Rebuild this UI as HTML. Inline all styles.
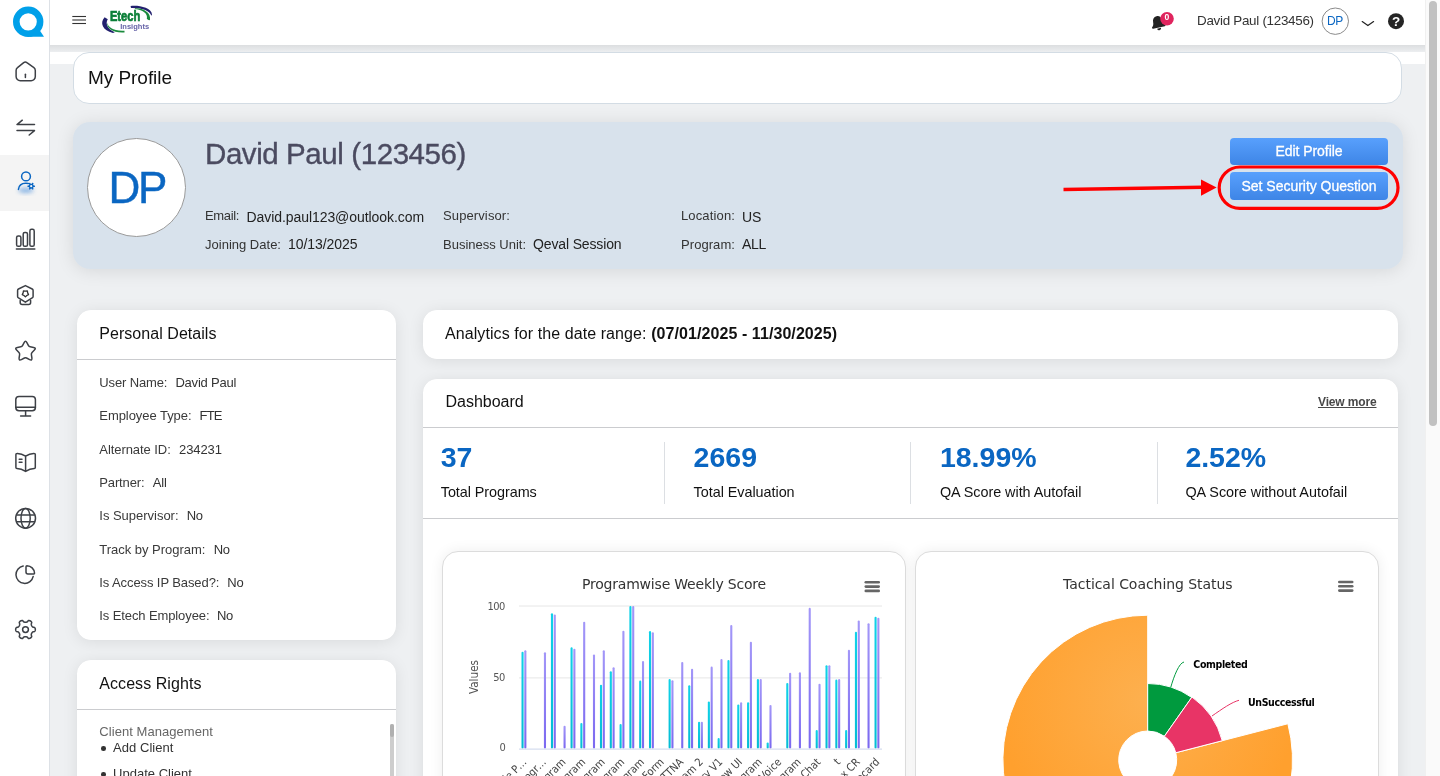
<!DOCTYPE html>
<html lang="en">
<head>
<meta charset="utf-8">
<title>My Profile</title>
<style>
*{box-sizing:border-box;margin:0;padding:0}
html,body{width:1440px;height:776px;overflow:hidden}
body{position:relative;background:#eef0f2;font-family:"Liberation Sans",sans-serif;color:#333;font-size:13px}
#app{position:absolute;left:0;top:0;width:1440px;height:776px;overflow:hidden;will-change:transform}
.abs{position:absolute}
.t{position:absolute;white-space:nowrap;line-height:1}
#side{left:0;top:0;width:50px;height:776px;background:#fff;border-right:1px solid #dde1e6}
#side .act{position:absolute;left:0;top:155px;width:49px;height:56px;background:#f4f4f4}
#top{left:50px;top:0;width:1375px;height:45px;background:#fff}
#topsh{left:50px;top:45px;width:1375px;height:7px;background:linear-gradient(#dcdee0,#eceef0)}
#band{left:50px;top:52px;width:1375px;height:12px;background:#fff}
#strack{left:1425px;top:0;width:15px;height:776px;background:#fafafa;border-left:1px solid #f0f0f0}
#sthumb{left:1429px;top:1px;width:8px;height:425px;border-radius:4px;background:#c1c1c1}
.card{position:absolute;background:#fff;border-radius:14px}
.sh{box-shadow:0 2px 16px rgba(0,0,0,.085),0 0 1px rgba(0,0,0,.08)}
.hl{position:absolute;height:1px;background:#cbcccf}
.vl1{position:absolute;width:1px;background:#dcdfe3}
#pcard{left:72.5px;top:122px;width:1330px;height:147px;background:#d8e2ec;border-radius:17px;box-shadow:0 2px 18px rgba(0,0,0,.10)}
#avatar{left:87px;top:138px;width:99px;height:99px;border-radius:50%;background:#fff;border:1px solid #9a9a9a}
.btn{position:absolute;left:1230px;width:158px;border-radius:4px;background:linear-gradient(#58a0fd,#3e85e6)}

.ccard{position:absolute;background:#fff;border-radius:16px;border:1px solid #dcdcdc;box-shadow:0 0 14px rgba(0,0,0,.07)}
</style>
</head>
<body>
<div id="app">

<div id="top" class="abs"></div>
<div id="topsh" class="abs"></div>
<div id="band" class="abs"></div>
<div id="side" class="abs"><div class="act"></div>
</div>
<div id="strack" class="abs"></div>
<div id="sthumb" class="abs"></div>
<div class="card" style="left:73px;top:52px;width:1329px;height:51.5px;border:1px solid #d3dce4;border-radius:16px"></div>
<div class="t" style="left:88.0px;top:68.4px;font-size:19px;color:#111;letter-spacing:-0.047px;">My Profile</div>
<div id="pcard" class="abs"></div>
<div id="avatar" class="abs"></div>
<div class="t" style="left:108.5px;top:165.8px;font-size:44px;color:#0a66c2;letter-spacing:-2.312px;-webkit-text-stroke:0.45px #0a66c2;">DP</div>
<div class="t" style="left:205.0px;top:139.0px;font-size:29.5px;color:#4b4b60;letter-spacing:-0.419px;-webkit-text-stroke:0.35px #4b4b60;">David Paul (123456)</div>
<div class="t" style="left:205.0px;top:209.3px;font-size:13px;color:#333;letter-spacing:-0.354px;">Email:</div>
<div class="t" style="left:246.5px;top:209.6px;font-size:14px;color:#222;letter-spacing:-0.069px;">David.paul123@outlook.com</div>
<div class="t" style="left:443.0px;top:209.3px;font-size:13px;color:#333;letter-spacing:0.114px;">Supervisor:</div>
<div class="t" style="left:681.0px;top:209.3px;font-size:13px;color:#333;letter-spacing:0.137px;">Location:</div>
<div class="t" style="left:742.0px;top:209.6px;font-size:14px;color:#222;letter-spacing:-0.227px;">US</div>
<div class="t" style="left:205.0px;top:237.5px;font-size:13px;color:#333;letter-spacing:0.008px;">Joining Date:</div>
<div class="t" style="left:288.0px;top:237.1px;font-size:14px;color:#222;letter-spacing:-0.058px;">10/13/2025</div>
<div class="t" style="left:443.0px;top:237.5px;font-size:13px;color:#333;letter-spacing:-0.007px;">Business Unit:</div>
<div class="t" style="left:533.0px;top:237.1px;font-size:14px;color:#222;letter-spacing:-0.137px;">Qeval Session</div>
<div class="t" style="left:681.0px;top:237.5px;font-size:13px;color:#333;letter-spacing:0.066px;">Program:</div>
<div class="t" style="left:742.0px;top:237.1px;font-size:14px;color:#222;letter-spacing:-0.307px;">ALL</div>
<div class="btn" style="top:138px;height:26.8px"></div>
<div class="btn" style="top:172px;height:28px"></div>
<div class="t" style="left:1275.5px;top:144.1px;font-size:14px;color:#fff;letter-spacing:-0.059px;-webkit-text-stroke:0.3px #fff;">Edit Profile</div>
<div class="t" style="left:1241.5px;top:179.1px;font-size:14px;color:#fff;letter-spacing:-0.019px;-webkit-text-stroke:0.3px #fff;">Set Security Question</div>
<svg class="abs" style="left:1050px;top:160px" width="360" height="56" viewBox="1050 160 360 56">
<rect x="1219.2" y="167" width="178.8" height="41.3" rx="20.6" fill="none" stroke="#ff0000" stroke-width="3.2"/>
<line x1="1063.5" y1="189.6" x2="1203" y2="187.2" stroke="#ff0000" stroke-width="3.5"/>
<polygon points="1201,179.6 1216.6,187.4 1201,195.8" fill="#ff0000"/>
</svg><div class="card sh" style="left:77px;top:310px;width:319px;height:330px"></div>
<div class="hl" style="left:77px;top:359px;width:319px"></div>
<div class="t" style="left:99.3px;top:325.5px;font-size:16px;color:#111;letter-spacing:0.044px;">Personal Details</div>
<div class="t" style="left:99.3px;top:376.2px;font-size:13px;color:#3a3a3a;letter-spacing:-0.136px;">User Name:</div>
<div class="t" style="left:175.4px;top:376.2px;font-size:13px;color:#333;letter-spacing:-0.197px;">David Paul</div>
<div class="t" style="left:99.3px;top:409.3px;font-size:13px;color:#3a3a3a;letter-spacing:-0.056px;">Employee Type:</div>
<div class="t" style="left:199.5px;top:409.3px;font-size:13px;color:#333;letter-spacing:-0.754px;">FTE</div>
<div class="t" style="left:99.3px;top:442.7px;font-size:13px;color:#3a3a3a;letter-spacing:-0.067px;">Alternate ID:</div>
<div class="t" style="left:179.1px;top:442.7px;font-size:13px;color:#333;letter-spacing:-0.115px;">234231</div>
<div class="t" style="left:99.3px;top:476.2px;font-size:13px;color:#3a3a3a;letter-spacing:-0.144px;">Partner:</div>
<div class="t" style="left:152.8px;top:476.2px;font-size:13px;color:#333;letter-spacing:-0.184px;">All</div>
<div class="t" style="left:99.3px;top:509.3px;font-size:13px;color:#3a3a3a;letter-spacing:-0.020px;">Is Supervisor:</div>
<div class="t" style="left:186.8px;top:509.3px;font-size:13px;color:#333;letter-spacing:-0.413px;">No</div>
<div class="t" style="left:99.3px;top:543.0px;font-size:13px;color:#3a3a3a;letter-spacing:-0.020px;">Track by Program:</div>
<div class="t" style="left:213.7px;top:543.0px;font-size:13px;color:#333;letter-spacing:-0.262px;">No</div>
<div class="t" style="left:99.3px;top:576.0px;font-size:13px;color:#3a3a3a;letter-spacing:-0.095px;">Is Access IP Based?:</div>
<div class="t" style="left:227.3px;top:576.0px;font-size:13px;color:#333;letter-spacing:-0.263px;">No</div>
<div class="t" style="left:99.3px;top:609.1px;font-size:13px;color:#3a3a3a;letter-spacing:-0.106px;">Is Etech Employee:</div>
<div class="t" style="left:217.1px;top:609.1px;font-size:13px;color:#333;letter-spacing:-0.362px;">No</div>
<div class="card sh" style="left:77px;top:660px;width:319px;height:140px"></div>
<div class="hl" style="left:77px;top:709px;width:319px"></div>
<div class="t" style="left:99.3px;top:675.5px;font-size:16px;color:#111;letter-spacing:0.063px;">Access Rights</div>
<div class="t" style="left:99.3px;top:725.0px;font-size:13px;color:#666;letter-spacing:0.057px;">Client Management</div>
<div class="abs" style="left:101px;top:746.3px;width:4.6px;height:4.6px;border-radius:50%;background:#333"></div>
<div class="t" style="left:113.0px;top:740.8px;font-size:13px;color:#333;letter-spacing:0.052px;">Add Client</div>
<div class="abs" style="left:101px;top:772.3px;width:4.6px;height:4.6px;border-radius:50%;background:#333"></div>
<div class="t" style="left:113.0px;top:766.8px;font-size:13px;color:#333;letter-spacing:0.017px;">Update Client</div>
<div class="abs" style="left:389.5px;top:724px;width:4.5px;height:60px;background:#cdcdcd;border-radius:2px 2px 0 0"></div>
<div class="abs" style="left:389.5px;top:724px;width:4.5px;height:13px;background:#b0b0b0;border-radius:2px"></div>
<div class="card sh" style="left:423px;top:310px;width:975px;height:49px"></div>
<div class="t" style="left:445.0px;top:325.8px;font-size:16px;color:#111;letter-spacing:0.078px;">Analytics for the date range:</div>
<div class="t" style="left:651.2px;top:325.8px;font-size:16px;color:#111;font-weight:bold;letter-spacing:0.074px;">(07/01/2025 - 11/30/2025)</div>
<div class="card sh" style="left:423px;top:379px;width:975px;height:430px"></div>
<div class="hl" style="left:423px;top:427px;width:975px"></div>
<div class="hl" style="left:423px;top:518px;width:975px"></div>
<div class="t" style="left:445.5px;top:393.5px;font-size:16px;color:#111;letter-spacing:-0.020px;">Dashboard</div>
<div class="t" style="left:1318.0px;top:396.4px;font-size:12px;color:#484848;font-weight:bold;letter-spacing:-0.146px;text-decoration:underline;">View more</div>
<div class="t" style="left:440.8px;top:442.6px;font-size:28.5px;color:#0a66c2;font-weight:bold;letter-spacing:-0.152px;">37</div>
<div class="t" style="left:440.8px;top:485.0px;font-size:14.4px;color:#111;letter-spacing:-0.063px;">Total Programs</div>
<div class="t" style="left:693.6px;top:442.6px;font-size:28.5px;color:#0a66c2;font-weight:bold;letter-spacing:-0.002px;">2669</div>
<div class="t" style="left:693.6px;top:485.0px;font-size:14.4px;color:#111;letter-spacing:-0.038px;">Total Evaluation</div>
<div class="t" style="left:939.9px;top:442.6px;font-size:28.5px;color:#0a66c2;font-weight:bold;letter-spacing:0.005px;">18.99%</div>
<div class="t" style="left:939.9px;top:485.0px;font-size:14.4px;color:#111;letter-spacing:-0.040px;">QA Score with Autofail</div>
<div class="t" style="left:1185.4px;top:442.6px;font-size:28.5px;color:#0a66c2;font-weight:bold;letter-spacing:-0.043px;">2.52%</div>
<div class="t" style="left:1185.4px;top:485.0px;font-size:14.4px;color:#111;letter-spacing:-0.024px;">QA Score without Autofail</div>
<div class="vl1" style="left:664.4px;top:442px;height:62px"></div>
<div class="vl1" style="left:910.2px;top:442px;height:62px"></div>
<div class="vl1" style="left:1156.5px;top:442px;height:62px"></div>
<div class="ccard" style="left:441.5px;top:551px;width:464px;height:260px"></div>
<div class="ccard" style="left:914.7px;top:551px;width:464.8px;height:260px"></div>
<svg class="abs" style="left:0;top:540px" width="1440" height="236" viewBox="0 540 1440 236"><defs><linearGradient id="gc" x1="0" y1="0" x2="0" y2="1"><stop offset="0" stop-color="#10d2e8"/><stop offset="1" stop-color="#04bcd4"/></linearGradient><linearGradient id="gp" x1="0" y1="0" x2="0" y2="1"><stop offset="0" stop-color="#a397f8"/><stop offset="1" stop-color="#7a68f0"/></linearGradient><radialGradient id="go" gradientUnits="userSpaceOnUse" cx="1147.7" cy="700" r="150"><stop offset="0" stop-color="#fdb04f"/><stop offset="1" stop-color="#ffa02e"/></radialGradient></defs><line x1="519" y1="606.0" x2="882" y2="606.0" stroke="#e6e6e6" stroke-width="1"/><line x1="519" y1="677.9" x2="882" y2="677.9" stroke="#e6e6e6" stroke-width="1"/><rect x="521.50" y="651.63" width="2.1" height="96.97" rx="1.05" fill="url(#gc)"/><rect x="524.30" y="650.21" width="2.1" height="98.39" rx="1.05" fill="url(#gp)"/><rect x="543.92" y="652.20" width="2.1" height="96.40" rx="1.05" fill="url(#gp)"/><rect x="550.92" y="613.13" width="2.1" height="135.47" rx="1.05" fill="url(#gc)"/><rect x="553.72" y="614.56" width="2.1" height="134.04" rx="1.05" fill="url(#gp)"/><rect x="563.53" y="725.78" width="2.1" height="22.82" rx="1.05" fill="url(#gp)"/><rect x="570.53" y="647.35" width="2.1" height="101.25" rx="1.05" fill="url(#gc)"/><rect x="573.33" y="648.78" width="2.1" height="99.82" rx="1.05" fill="url(#gp)"/><rect x="580.34" y="722.93" width="2.1" height="25.67" rx="1.05" fill="url(#gc)"/><rect x="583.14" y="621.69" width="2.1" height="126.91" rx="1.05" fill="url(#gp)"/><rect x="592.95" y="654.48" width="2.1" height="94.12" rx="1.05" fill="url(#gp)"/><rect x="599.95" y="684.72" width="2.1" height="63.88" rx="1.05" fill="url(#gc)"/><rect x="602.75" y="650.21" width="2.1" height="98.39" rx="1.05" fill="url(#gp)"/><rect x="609.76" y="671.31" width="2.1" height="77.29" rx="1.05" fill="url(#gc)"/><rect x="612.56" y="667.32" width="2.1" height="81.28" rx="1.05" fill="url(#gp)"/><rect x="619.56" y="723.93" width="2.1" height="24.67" rx="1.05" fill="url(#gc)"/><rect x="622.36" y="630.67" width="2.1" height="117.93" rx="1.05" fill="url(#gp)"/><rect x="629.37" y="606.00" width="2.1" height="142.60" rx="1.05" fill="url(#gc)"/><rect x="632.17" y="606.00" width="2.1" height="142.60" rx="1.05" fill="url(#gp)"/><rect x="639.17" y="680.58" width="2.1" height="68.02" rx="1.05" fill="url(#gc)"/><rect x="641.98" y="661.04" width="2.1" height="87.56" rx="1.05" fill="url(#gp)"/><rect x="648.98" y="631.10" width="2.1" height="117.50" rx="1.05" fill="url(#gc)"/><rect x="651.78" y="632.24" width="2.1" height="116.36" rx="1.05" fill="url(#gp)"/><rect x="668.59" y="679.01" width="2.1" height="69.59" rx="1.05" fill="url(#gc)"/><rect x="671.39" y="680.15" width="2.1" height="68.45" rx="1.05" fill="url(#gp)"/><rect x="681.20" y="662.04" width="2.1" height="86.56" rx="1.05" fill="url(#gp)"/><rect x="688.21" y="685.14" width="2.1" height="63.46" rx="1.05" fill="url(#gc)"/><rect x="691.01" y="668.74" width="2.1" height="79.86" rx="1.05" fill="url(#gp)"/><rect x="698.01" y="721.79" width="2.1" height="26.81" rx="1.05" fill="url(#gc)"/><rect x="700.81" y="721.79" width="2.1" height="26.81" rx="1.05" fill="url(#gp)"/><rect x="707.82" y="701.54" width="2.1" height="47.06" rx="1.05" fill="url(#gc)"/><rect x="710.62" y="666.61" width="2.1" height="82.00" rx="1.05" fill="url(#gp)"/><rect x="717.62" y="737.90" width="2.1" height="10.70" rx="1.05" fill="url(#gc)"/><rect x="720.42" y="658.90" width="2.1" height="89.70" rx="1.05" fill="url(#gp)"/><rect x="727.43" y="660.05" width="2.1" height="88.55" rx="1.05" fill="url(#gc)"/><rect x="730.23" y="624.97" width="2.1" height="123.63" rx="1.05" fill="url(#gp)"/><rect x="737.24" y="704.39" width="2.1" height="44.21" rx="1.05" fill="url(#gc)"/><rect x="740.04" y="702.25" width="2.1" height="46.35" rx="1.05" fill="url(#gp)"/><rect x="747.04" y="702.25" width="2.1" height="46.35" rx="1.05" fill="url(#gc)"/><rect x="749.84" y="641.79" width="2.1" height="106.81" rx="1.05" fill="url(#gp)"/><rect x="756.85" y="679.01" width="2.1" height="69.59" rx="1.05" fill="url(#gc)"/><rect x="759.65" y="679.01" width="2.1" height="69.59" rx="1.05" fill="url(#gp)"/><rect x="766.65" y="742.47" width="2.1" height="6.13" rx="1.05" fill="url(#gc)"/><rect x="769.45" y="704.96" width="2.1" height="43.64" rx="1.05" fill="url(#gp)"/><rect x="786.26" y="683.00" width="2.1" height="65.60" rx="1.05" fill="url(#gc)"/><rect x="789.07" y="672.74" width="2.1" height="75.86" rx="1.05" fill="url(#gp)"/><rect x="798.87" y="672.31" width="2.1" height="76.29" rx="1.05" fill="url(#gp)"/><rect x="808.68" y="607.85" width="2.1" height="140.75" rx="1.05" fill="url(#gp)"/><rect x="815.68" y="730.06" width="2.1" height="18.54" rx="1.05" fill="url(#gc)"/><rect x="818.48" y="683.72" width="2.1" height="64.88" rx="1.05" fill="url(#gp)"/><rect x="825.49" y="665.18" width="2.1" height="83.42" rx="1.05" fill="url(#gc)"/><rect x="828.29" y="665.18" width="2.1" height="83.42" rx="1.05" fill="url(#gp)"/><rect x="835.30" y="679.58" width="2.1" height="69.02" rx="1.05" fill="url(#gc)"/><rect x="838.10" y="679.01" width="2.1" height="69.59" rx="1.05" fill="url(#gp)"/><rect x="845.10" y="730.06" width="2.1" height="18.54" rx="1.05" fill="url(#gc)"/><rect x="847.90" y="649.64" width="2.1" height="98.96" rx="1.05" fill="url(#gp)"/><rect x="854.91" y="631.67" width="2.1" height="116.93" rx="1.05" fill="url(#gc)"/><rect x="857.71" y="620.40" width="2.1" height="128.20" rx="1.05" fill="url(#gp)"/><rect x="867.51" y="623.25" width="2.1" height="125.35" rx="1.05" fill="url(#gp)"/><rect x="874.52" y="616.69" width="2.1" height="131.91" rx="1.05" fill="url(#gc)"/><rect x="877.32" y="617.69" width="2.1" height="130.91" rx="1.05" fill="url(#gp)"/><line x1="519" y1="749.1" x2="882" y2="749.1" stroke="#ccd6eb" stroke-width="1"/><rect x="864.5" y="581.0" width="15.5" height="2.6" rx="1.3" fill="#666"/><rect x="864.5" y="585.3" width="15.5" height="2.6" rx="1.3" fill="#666"/><rect x="864.5" y="589.6" width="15.5" height="2.6" rx="1.3" fill="#666"/><rect x="1338.0" y="580.7" width="15.5" height="2.6" rx="1.3" fill="#666"/><rect x="1338.0" y="585.0" width="15.5" height="2.6" rx="1.3" fill="#666"/><rect x="1338.0" y="589.3" width="15.5" height="2.6" rx="1.3" fill="#666"/><text x="521.5" y="757" transform="rotate(-45 521.5 757)" text-anchor="end" font-family='"DejaVu Sans Condensed","DejaVu Sans",sans-serif' font-size="11" fill="#444" dominant-baseline="hanging">Sample P…</text><text x="541.1" y="757" transform="rotate(-45 541.1 757)" text-anchor="end" font-family='"DejaVu Sans Condensed","DejaVu Sans",sans-serif' font-size="11" fill="#444" dominant-baseline="hanging">Test Progr…</text><text x="560.7" y="757" transform="rotate(-45 560.7 757)" text-anchor="end" font-family='"DejaVu Sans Condensed","DejaVu Sans",sans-serif' font-size="11" fill="#444" dominant-baseline="hanging">Demo Program</text><text x="580.3" y="757" transform="rotate(-45 580.3 757)" text-anchor="end" font-family='"DejaVu Sans Condensed","DejaVu Sans",sans-serif' font-size="11" fill="#444" dominant-baseline="hanging">Sales Program</text><text x="599.9" y="757" transform="rotate(-45 599.9 757)" text-anchor="end" font-family='"DejaVu Sans Condensed","DejaVu Sans",sans-serif' font-size="11" fill="#444" dominant-baseline="hanging">Voice Program</text><text x="619.5" y="757" transform="rotate(-45 619.5 757)" text-anchor="end" font-family='"DejaVu Sans Condensed","DejaVu Sans",sans-serif' font-size="11" fill="#444" dominant-baseline="hanging">Email Program</text><text x="639.2" y="757" transform="rotate(-45 639.2 757)" text-anchor="end" font-family='"DejaVu Sans Condensed","DejaVu Sans",sans-serif' font-size="11" fill="#444" dominant-baseline="hanging">Audit Program</text><text x="658.8" y="757" transform="rotate(-45 658.8 757)" text-anchor="end" font-family='"DejaVu Sans Condensed","DejaVu Sans",sans-serif' font-size="11" fill="#444" dominant-baseline="hanging">Test Form</text><text x="678.4" y="757" transform="rotate(-45 678.4 757)" text-anchor="end" font-family='"DejaVu Sans Condensed","DejaVu Sans",sans-serif' font-size="11" fill="#444" dominant-baseline="hanging">ETTNA</text><text x="698.0" y="757" transform="rotate(-45 698.0 757)" text-anchor="end" font-family='"DejaVu Sans Condensed","DejaVu Sans",sans-serif' font-size="11" fill="#444" dominant-baseline="hanging">Program 2</text><text x="717.6" y="757" transform="rotate(-45 717.6 757)" text-anchor="end" font-family='"DejaVu Sans Condensed","DejaVu Sans",sans-serif' font-size="11" fill="#444" dominant-baseline="hanging">Discovery V1</text><text x="737.2" y="757" transform="rotate(-45 737.2 757)" text-anchor="end" font-family='"DejaVu Sans Condensed","DejaVu Sans",sans-serif' font-size="11" fill="#444" dominant-baseline="hanging">New UI</text><text x="756.8" y="757" transform="rotate(-45 756.8 757)" text-anchor="end" font-family='"DejaVu Sans Condensed","DejaVu Sans",sans-serif' font-size="11" fill="#444" dominant-baseline="hanging">QA Program</text><text x="776.4" y="757" transform="rotate(-45 776.4 757)" text-anchor="end" font-family='"DejaVu Sans Condensed","DejaVu Sans",sans-serif' font-size="11" fill="#444" dominant-baseline="hanging">Voice</text><text x="796.0" y="757" transform="rotate(-45 796.0 757)" text-anchor="end" font-family='"DejaVu Sans Condensed","DejaVu Sans",sans-serif' font-size="11" fill="#444" dominant-baseline="hanging">Chat Program</text><text x="815.6" y="757" transform="rotate(-45 815.6 757)" text-anchor="end" font-family='"DejaVu Sans Condensed","DejaVu Sans",sans-serif' font-size="11" fill="#444" dominant-baseline="hanging">Chat</text><text x="835.3" y="757" transform="rotate(-45 835.3 757)" text-anchor="end" font-family='"DejaVu Sans Condensed","DejaVu Sans",sans-serif' font-size="11" fill="#444" dominant-baseline="hanging">t</text><text x="854.9" y="757" transform="rotate(-45 854.9 757)" text-anchor="end" font-family='"DejaVu Sans Condensed","DejaVu Sans",sans-serif' font-size="11" fill="#444" dominant-baseline="hanging">Max CR</text><text x="874.5" y="757" transform="rotate(-45 874.5 757)" text-anchor="end" font-family='"DejaVu Sans Condensed","DejaVu Sans",sans-serif' font-size="11" fill="#444" dominant-baseline="hanging">Scorecard</text><text x="478" y="677" transform="rotate(-90 478 677)" text-anchor="middle" font-family='"DejaVu Sans Condensed","DejaVu Sans",sans-serif' font-size="11.6" fill="#555">Values</text><path d="M1287.89 723.74 A144.80 144.80 0 1 1 1147.70 615.20 L1147.70 731.00 A29.00 29.00 0 1 0 1175.78 752.74 Z" fill="url(#go)" stroke="#fff" stroke-width="1" stroke-linejoin="round"/><path d="M1147.70 683.50 A76.50 76.50 0 0 1 1191.69 697.41 L1164.38 736.27 A29.00 29.00 0 0 0 1147.70 731.00 Z" fill="#009a3e" stroke="#fff" stroke-width="1" stroke-linejoin="round"/><path d="M1191.98 697.00 A77.00 77.00 0 0 1 1222.25 740.72 L1175.78 752.74 A29.00 29.00 0 0 0 1164.38 736.27 Z" fill="#e83466" stroke="#fff" stroke-width="1" stroke-linejoin="round"/><path d="M1170.7 687.5 C1174 676 1179 663 1184 662" fill="none" stroke="#009a3e" stroke-width="1"/><path d="M1212 716 C1222 709 1232 702 1239 700.3" fill="none" stroke="#e83466" stroke-width="1"/></svg><div class="t" style="left:582.0px;top:577.4px;font-size:14px;color:#333;font-family:'DejaVu Sans',sans-serif;letter-spacing:-0.207px;">Programwise Weekly Score</div>
<div class="t" style="left:1063.1px;top:577.4px;font-size:14px;color:#333;font-family:'DejaVu Sans',sans-serif;letter-spacing:-0.051px;">Tactical Coaching Status</div>
<div class="t" style="left:487.4px;top:600.9px;font-size:11px;color:#555;font-family:'DejaVu Sans Condensed','DejaVu Sans',sans-serif;letter-spacing:-0.430px;">100</div>
<div class="t" style="left:493.2px;top:671.8px;font-size:11px;color:#555;font-family:'DejaVu Sans Condensed','DejaVu Sans',sans-serif;letter-spacing:-0.397px;">50</div>
<div class="t" style="left:499.5px;top:741.9px;font-size:11px;color:#555;font-family:'DejaVu Sans Condensed','DejaVu Sans',sans-serif;letter-spacing:-0.797px;">0</div>
<div class="t" style="left:1193.3px;top:659.1px;font-size:10.5px;color:#000;font-weight:bold;font-family:'DejaVu Sans Condensed','DejaVu Sans',sans-serif;letter-spacing:-0.353px;">Completed</div>
<div class="t" style="left:1248.0px;top:697.1px;font-size:10.5px;color:#000;font-weight:bold;font-family:'DejaVu Sans Condensed','DejaVu Sans',sans-serif;letter-spacing:-0.363px;">UnSuccessful</div>
<svg class="abs" style="left:0;top:0" width="50" height="776" viewBox="0 0 50 776"><defs><filter id="glow" x="-50%" y="-50%" width="200%" height="200%"><feGaussianBlur stdDeviation="2"/></filter></defs><circle cx="28.2" cy="21.8" r="11.9" fill="none" stroke="#00a0e9" stroke-width="6.6"/><path d="M37.5 27 L44 36.8 L29 36.8 Z" fill="#00a0e9"/><path d="M23.7 62.7 Q25.3 61.5 26.9 62.7 L33.9 67.6 Q35.3 68.6 35.3 70.4 V76.6 a4.2 4.2 0 0 1 -4.2 4.2 H20.3 a4.2 4.2 0 0 1 -4.2 -4.2 V70.4 Q16.1 68.6 17.5 67.6 Z" stroke="#3d4046" stroke-width="1.5" fill="none" stroke-linecap="round" stroke-linejoin="round"/><path d="M25.4 74.2 V77.4" stroke="#3d4046" stroke-width="1.5" fill="none" stroke-linecap="round" stroke-linejoin="round"/><path d="M34.5 124.6 H17 L22.3 120.2 M17 130.6 H34.5 L29.2 135" stroke="#3d4046" stroke-width="1.5" fill="none" stroke-linecap="round" stroke-linejoin="round"/><ellipse cx="25.9" cy="190.4" rx="7.6" ry="2.6" fill="#4a8fdc" opacity=".62" filter="url(#glow)"/><circle cx="26" cy="176.4" r="4.4" stroke="#0a66c2" stroke-width="1.5" fill="none" stroke-linecap="round" stroke-linejoin="round"/><path d="M18.4 189.4 C18.9 185.2 22 183.1 26 183.2 L28.4 183.4" stroke="#0a66c2" stroke-width="1.5" fill="none" stroke-linecap="round" stroke-linejoin="round"/><path d="M35.00 186.20 L34.97 186.46 L34.86 186.71 L34.66 186.94 L33.91 186.98 L33.61 187.08 L33.44 187.20 L33.32 187.33 L33.24 187.48 L33.19 187.64 L33.17 187.85 L33.23 188.16 L33.57 188.83 L33.48 189.11 L33.31 189.33 L33.10 189.49 L32.85 189.59 L32.58 189.63 L32.29 189.56 L31.88 188.93 L31.65 188.73 L31.46 188.64 L31.28 188.60 L31.12 188.60 L30.94 188.64 L30.75 188.73 L30.52 188.93 L30.11 189.56 L29.82 189.63 L29.55 189.59 L29.30 189.49 L29.09 189.33 L28.92 189.11 L28.83 188.83 L29.17 188.16 L29.23 187.85 L29.21 187.64 L29.16 187.48 L29.08 187.33 L28.96 187.20 L28.79 187.08 L28.49 186.98 L27.74 186.94 L27.54 186.71 L27.43 186.46 L27.40 186.20 L27.43 185.94 L27.54 185.69 L27.74 185.46 L28.49 185.42 L28.79 185.32 L28.96 185.20 L29.08 185.07 L29.16 184.92 L29.21 184.76 L29.23 184.55 L29.17 184.24 L28.83 183.57 L28.92 183.29 L29.09 183.07 L29.30 182.91 L29.55 182.81 L29.82 182.77 L30.11 182.84 L30.52 183.47 L30.75 183.67 L30.94 183.76 L31.12 183.80 L31.28 183.80 L31.46 183.76 L31.65 183.67 L31.88 183.47 L32.29 182.84 L32.58 182.77 L32.85 182.81 L33.10 182.91 L33.31 183.07 L33.48 183.29 L33.57 183.57 L33.23 184.24 L33.17 184.55 L33.19 184.76 L33.24 184.92 L33.32 185.07 L33.44 185.20 L33.61 185.32 L33.91 185.42 L34.66 185.46 L34.86 185.69 L34.97 185.94 Z" fill="#0a66c2"/><circle cx="31.2" cy="186.2" r="1.1" fill="#f4f4f4"/><rect x="16.6" y="236.0" width="4.3" height="10.3" rx="1.6" stroke="#3d4046" stroke-width="1.5" fill="none" stroke-linecap="round" stroke-linejoin="round"/><rect x="23.2" y="232.4" width="4.3" height="13.9" rx="1.6" stroke="#3d4046" stroke-width="1.5" fill="none" stroke-linecap="round" stroke-linejoin="round"/><rect x="29.9" y="229.3" width="4.3" height="17.0" rx="1.6" stroke="#3d4046" stroke-width="1.5" fill="none" stroke-linecap="round" stroke-linejoin="round"/><path d="M16.4 249 H34.8" stroke="#3d4046" stroke-width="1.5" fill="none" stroke-linecap="round" stroke-linejoin="round"/><path d="M25.4 285.6 L32.2 289 a1.6 1.6 0 0 1 .9 1.4 V296.4 a1.6 1.6 0 0 1 -.9 1.4 L25.4 302.2 L18.5 297.8 a1.6 1.6 0 0 1 -.9 -1.4 V290.4 a1.6 1.6 0 0 1 .9 -1.4 Z" stroke="#3d4046" stroke-width="1.5" fill="none" stroke-linecap="round" stroke-linejoin="round"/><path d="M25.40 296.90 L23.99 295.54 L22.26 294.62 L23.12 292.86 L23.46 290.93 L25.40 291.20 L27.34 290.93 L27.68 292.86 L28.54 294.62 L26.81 295.54 Z" stroke="#333" stroke-width="1.3" fill="none" stroke-linejoin="round"/><path d="M20.2 300.4 V302.6 a2 2 0 0 0 2 2 H28.6 a2 2 0 0 0 2 -2 V300.4" stroke="#3d4046" stroke-width="1.5" fill="none" stroke-linecap="round" stroke-linejoin="round"/><path d="M24.11 342.56 Q25.50 339.90 26.89 342.56 L28.47 345.58 Q29.03 346.65 30.21 346.85 L33.57 347.42 Q36.53 347.92 34.43 350.06 L32.05 352.50 Q31.21 353.35 31.38 354.54 L31.88 357.92 Q32.32 360.88 29.63 359.55 L26.57 358.03 Q25.50 357.50 24.43 358.03 L21.37 359.55 Q18.68 360.88 19.12 357.92 L19.62 354.54 Q19.79 353.35 18.95 352.50 L16.57 350.06 Q14.47 347.92 17.43 347.42 L20.79 346.85 Q21.97 346.65 22.53 345.58 Z" stroke="#3d4046" stroke-width="1.5" fill="none" stroke-linecap="round" stroke-linejoin="round"/><rect x="15.8" y="396.4" width="19.6" height="14.4" rx="3.2" stroke="#3d4046" stroke-width="1.5" fill="none" stroke-linecap="round" stroke-linejoin="round"/><path d="M15.8 407.3 H35.4 M25.6 411 V415.6 M20.6 415.9 H30.6" stroke="#3d4046" stroke-width="1.5" fill="none" stroke-linecap="round" stroke-linejoin="round"/><path d="M25.6 456.2 C22.5 454 19 453.3 16.9 453.4 a1 1 0 0 0 -1 1 V467.4 a1 1 0 0 0 1 1 C19.5 468.4 22.6 469.3 25.6 471.4 C28.6 469.3 31.7 468.4 34.3 468.4 a1 1 0 0 0 1 -1 V454.4 a1 1 0 0 0 -1 -1 C32.2 453.3 28.7 454 25.6 456.2 Z M25.6 456.2 V471.2 M19.2 459.2 H22 M19.2 462.2 H22" stroke="#3d4046" stroke-width="1.5" fill="none" stroke-linecap="round" stroke-linejoin="round"/><circle cx="25.6" cy="518.3" r="9.9" stroke="#3d4046" stroke-width="1.5" fill="none" stroke-linecap="round" stroke-linejoin="round"/><ellipse cx="25.6" cy="518.3" rx="4.6" ry="9.9" stroke="#3d4046" stroke-width="1.5" fill="none" stroke-linecap="round" stroke-linejoin="round"/><path d="M16.6 515 H34.6 M16.6 521.8 H34.6" stroke="#3d4046" stroke-width="1.5" fill="none" stroke-linecap="round" stroke-linejoin="round"/><path d="M23.2 566.1 A8.7 8.7 0 1 0 33.2 576.4" stroke="#3d4046" stroke-width="1.5" fill="none" stroke-linecap="round" stroke-linejoin="round"/><path d="M27 565.7 A7.8 7.8 0 0 1 34.5 573 a1 1 0 0 1 -1 1.1 H28 a2 2 0 0 1 -2 -2 V566.7 a1 1 0 0 1 1 -1 Z" stroke="#3d4046" stroke-width="1.5" fill="none" stroke-linecap="round" stroke-linejoin="round"/><path d="M35.35 629.50 L35.28 630.18 L35.06 630.84 L34.66 631.45 L33.21 631.71 L32.61 632.09 L32.22 632.49 L31.91 632.91 L31.66 633.35 L31.45 633.82 L31.29 634.36 L31.27 635.07 L31.76 636.46 L31.45 637.11 L30.98 637.63 L30.43 638.03 L29.80 638.31 L29.12 638.45 L28.39 638.40 L27.44 637.28 L26.81 636.95 L26.27 636.82 L25.75 636.76 L25.25 636.76 L24.73 636.82 L24.19 636.95 L23.56 637.28 L22.61 638.40 L21.88 638.45 L21.20 638.31 L20.58 638.03 L20.02 637.63 L19.55 637.11 L19.24 636.46 L19.73 635.07 L19.71 634.36 L19.55 633.82 L19.34 633.35 L19.09 632.91 L18.78 632.49 L18.39 632.09 L17.79 631.71 L16.34 631.45 L15.94 630.84 L15.72 630.18 L15.65 629.50 L15.72 628.82 L15.94 628.16 L16.34 627.55 L17.79 627.29 L18.39 626.91 L18.78 626.51 L19.09 626.09 L19.34 625.65 L19.55 625.18 L19.71 624.64 L19.73 623.93 L19.24 622.54 L19.55 621.89 L20.02 621.37 L20.57 620.97 L21.20 620.69 L21.88 620.55 L22.61 620.60 L23.56 621.72 L24.19 622.05 L24.73 622.18 L25.25 622.24 L25.75 622.24 L26.27 622.18 L26.81 622.05 L27.44 621.72 L28.39 620.60 L29.12 620.55 L29.80 620.69 L30.43 620.97 L30.98 621.37 L31.45 621.89 L31.76 622.54 L31.27 623.93 L31.29 624.64 L31.45 625.18 L31.66 625.65 L31.91 626.09 L32.22 626.51 L32.61 626.91 L33.21 627.29 L34.66 627.55 L35.06 628.16 L35.28 628.82 Z" stroke="#3d4046" stroke-width="1.5" fill="none" stroke-linecap="round" stroke-linejoin="round"/><circle cx="25.5" cy="629.6" r="2.9" stroke="#3d4046" stroke-width="1.5" fill="none" stroke-linecap="round" stroke-linejoin="round"/></svg><svg class="abs" style="left:50px;top:0" width="1375" height="45" viewBox="50 0 1375 45"><line x1="72.3" y1="16.5" x2="86" y2="16.5" stroke="#333" stroke-width="1.1"/><line x1="72.3" y1="20.0" x2="86" y2="20.0" stroke="#333" stroke-width="1.1"/><line x1="72.3" y1="23.5" x2="86" y2="23.5" stroke="#333" stroke-width="1.1"/><path d="M104.6 17.2 L107.8 19.2 C105.4 23 106.6 28.4 114.8 32.2 L113 32.9 C102.6 30.6 99.4 22.6 104.6 17.2 Z" fill="#22206e"/><path d="M107.3 22.6 C107.8 27.4 113.8 31.4 124.5 30.7 L124.5 32.5 C113 33.2 106.4 28.6 107.3 22.6 Z" fill="#1a8a3c"/><path d="M130.6 6 C138 5 151.6 7.4 152 14.4 L151.3 15.8 C150 10.6 142 7.7 131 8 Z" fill="#22206e"/><path d="M135 8.3 C143.4 8 151.2 12.6 150 20 Q148.4 20.6 146.8 18.8 C148.2 13.8 143.4 9.9 135 8.9 Z" fill="#1a8a3c"/><text x="109.9" y="21.4" font-family='"Liberation Sans",sans-serif' font-weight="bold" font-size="15" fill="#0b7f38" stroke="#0b7f38" stroke-width="0.7" textLength="30.4" lengthAdjust="spacingAndGlyphs">Etech</text><text x="120.2" y="28.6" font-family='"Liberation Sans",sans-serif' font-weight="bold" font-size="8.1" fill="#6663a8" textLength="28.9" lengthAdjust="spacingAndGlyphs">Insights</text><g transform="rotate(-12 1158 23)"><path d="M1158 16 c-3 0 -4.6 2.4 -4.6 5.2 c0 2.4 -.8 3.6 -2 4.8 c-.6 .6 -.2 1.6 .7 1.6 h11.8 c.9 0 1.3 -1 .7 -1.6 c-1.2 -1.2 -2 -2.4 -2 -4.8 c0 -2.8 -1.6 -5.2 -4.6 -5.2 Z" fill="#222"/><path d="M1156 28.4 a2 2 0 0 0 4 0 Z" fill="#222"/></g><circle cx="1167" cy="18.7" r="6.8" fill="#e0245e"/><text x="1167" y="20.4" text-anchor="middle" font-family='"Liberation Sans",sans-serif' font-weight="bold" font-size="8.6" fill="#fff">0</text><circle cx="1335.3" cy="21.2" r="13.2" fill="#fff" stroke="#8a8a8a" stroke-width="1"/><path d="M1362.2 21.6 L1367.9 25.6 L1373.6 21.6" fill="none" stroke="#222" stroke-width="1.2" stroke-linecap="round" stroke-linejoin="round"/><circle cx="1396" cy="21.2" r="8" fill="#252525"/><text x="1396" y="26" text-anchor="middle" font-family='"Liberation Sans",sans-serif' font-weight="bold" font-size="13.5" fill="#fff">?</text></svg><div class="t" style="left:1197.0px;top:13.7px;font-size:13.4px;color:#333;letter-spacing:-0.279px;">David Paul (123456)</div>
<div class="t" style="left:1327.0px;top:15.3px;font-size:12px;color:#0a66c2;letter-spacing:-0.336px;">DP</div>
</div>
</body>
</html>
